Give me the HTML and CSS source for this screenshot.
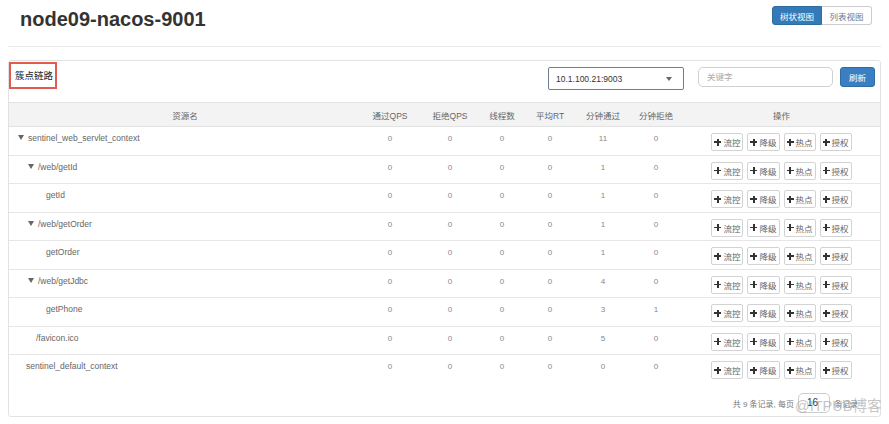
FILE: index.html
```html
<!DOCTYPE html>
<html lang="zh-CN">
<head>
    <meta charset="UTF-8">
    <title>簇点链路 - node09-nacos-9001</title>
    <link rel="stylesheet" href="styles.css">
</head>
<body>
    <div class="page-header">
        <h1>node09-nacos-9001</h1>
        <div class="view-toggle">
            <button class="toggle-btn active">树状视图</button>
            <button class="toggle-btn">列表视图</button>
        </div>
    </div>

    <div class="panel">
        <div class="panel-head">
            <div class="panel-title">簇点链路</div>
            <div class="controls">
                <div class="select-box">
                    <span>10.1.100.21:9003</span>
                    <span class="caret"></span>
                </div>
                <div class="search-box">关键字</div>
                <button class="refresh-btn">刷新</button>
            </div>
        </div>

        <table class="resource-table">
            <colgroup>
                <col style="width: 352px">
                <col style="width: 58px">
                <col style="width: 62px">
                <col style="width: 42px">
                <col style="width: 54px">
                <col style="width: 52px">
                <col style="width: 54px">
                <col style="width: 197px">
            </colgroup>
            <thead>
                <tr>
                    <th>资源名</th>
                    <th>通过QPS</th>
                    <th>拒绝QPS</th>
                    <th>线程数</th>
                    <th>平均RT</th>
                    <th>分钟通过</th>
                    <th>分钟拒绝</th>
                    <th>操作</th>
                </tr>
            </thead>
            <tbody>
                <tr>
                    <td class="name lvl-0"><span class="tri"></span>sentinel_web_servlet_context</td>
                    <td>0</td><td>0</td><td>0</td><td>0</td><td>11</td><td>0</td>
                    <td class="ops"><button><i class="plus"></i>流控</button><button><i class="plus"></i>降级</button><button><i class="plus"></i>热点</button><button><i class="plus"></i>授权</button></td>
                </tr>
                <tr>
                    <td class="name lvl-1"><span class="tri"></span>/web/getId</td>
                    <td>0</td><td>0</td><td>0</td><td>0</td><td>1</td><td>0</td>
                    <td class="ops"><button><i class="plus"></i>流控</button><button><i class="plus"></i>降级</button><button><i class="plus"></i>热点</button><button><i class="plus"></i>授权</button></td>
                </tr>
                <tr>
                    <td class="name lvl-2"><span class="leaf"></span>getId</td>
                    <td>0</td><td>0</td><td>0</td><td>0</td><td>1</td><td>0</td>
                    <td class="ops"><button><i class="plus"></i>流控</button><button><i class="plus"></i>降级</button><button><i class="plus"></i>热点</button><button><i class="plus"></i>授权</button></td>
                </tr>
                <tr>
                    <td class="name lvl-1"><span class="tri"></span>/web/getOrder</td>
                    <td>0</td><td>0</td><td>0</td><td>0</td><td>1</td><td>0</td>
                    <td class="ops"><button><i class="plus"></i>流控</button><button><i class="plus"></i>降级</button><button><i class="plus"></i>热点</button><button><i class="plus"></i>授权</button></td>
                </tr>
                <tr>
                    <td class="name lvl-2"><span class="leaf"></span>getOrder</td>
                    <td>0</td><td>0</td><td>0</td><td>0</td><td>1</td><td>0</td>
                    <td class="ops"><button><i class="plus"></i>流控</button><button><i class="plus"></i>降级</button><button><i class="plus"></i>热点</button><button><i class="plus"></i>授权</button></td>
                </tr>
                <tr>
                    <td class="name lvl-1"><span class="tri"></span>/web/getJdbc</td>
                    <td>0</td><td>0</td><td>0</td><td>0</td><td>4</td><td>0</td>
                    <td class="ops"><button><i class="plus"></i>流控</button><button><i class="plus"></i>降级</button><button><i class="plus"></i>热点</button><button><i class="plus"></i>授权</button></td>
                </tr>
                <tr>
                    <td class="name lvl-2"><span class="leaf"></span>getPhone</td>
                    <td>0</td><td>0</td><td>0</td><td>0</td><td>3</td><td>1</td>
                    <td class="ops"><button><i class="plus"></i>流控</button><button><i class="plus"></i>降级</button><button><i class="plus"></i>热点</button><button><i class="plus"></i>授权</button></td>
                </tr>
                <tr>
                    <td class="name lvl-1"><span class="leaf"></span>/favicon.ico</td>
                    <td>0</td><td>0</td><td>0</td><td>0</td><td>5</td><td>0</td>
                    <td class="ops"><button><i class="plus"></i>流控</button><button><i class="plus"></i>降级</button><button><i class="plus"></i>热点</button><button><i class="plus"></i>授权</button></td>
                </tr>
                <tr>
                    <td class="name lvl-0"><span class="leaf"></span>sentinel_default_context</td>
                    <td>0</td><td>0</td><td>0</td><td>0</td><td>0</td><td>0</td>
                    <td class="ops"><button><i class="plus"></i>流控</button><button><i class="plus"></i>降级</button><button><i class="plus"></i>热点</button><button><i class="plus"></i>授权</button></td>
                </tr>
            </tbody>
        </table>

        <div class="pager">
            <span>共 9 条记录, 每页</span>
            <span class="page-size">16</span>
            <span>条记录</span>
        </div>

        <div class="watermark">@ITPUB博客</div>
    </div>
</body>
</html>
```

FILE: styles.css
```css
* {
    margin: 0;
    padding: 0;
    box-sizing: border-box;
}

body {
    font-family: 'Liberation Sans', 'Noto Sans CJK SC', sans-serif;
    background-color: #fff;
    color: #333;
    width: 889px;
}

button {
    font-family: inherit;
    cursor: pointer;
}

/* Page header */
.page-header {
    display: flex;
    justify-content: space-between;
    align-items: flex-start;
    height: 47px;
    margin: 0 8px;
    border-bottom: 1px solid #eaeaea;
}

.page-header h1 {
    padding: 7px 0 0 12px;
    font-size: 20px;
    line-height: 24px;
    font-weight: bold;
    color: #333;
}

.view-toggle {
    display: flex;
    margin: 6px 9px 0 0;
}

.toggle-btn {
    width: 50px;
    height: 19px;
    font-size: 8.5px;
    border: 1px solid #ccc;
    background-color: #fff;
    color: #6a7a8c;
}

.toggle-btn.active {
    background-color: #337ab7;
    border-color: #2e6da4;
    color: #fff;
    border-radius: 3px 0 0 3px;
}

.toggle-btn + .toggle-btn {
    border-left: none;
    border-radius: 0 3px 3px 0;
}

/* Panel */
.panel {
    position: relative;
    margin: 13px 8px 0 8px;
    border: 1px solid #e2e2e2;
    border-radius: 3px;
    height: 357px;
}

.panel-head {
    display: flex;
    align-items: flex-start;
    height: 41px;
}

.panel-title {
    margin-top: 1px;
    width: 48px;
    height: 27px;
    border: 2px solid #e25b4f;
    padding-left: 4px;
    font-size: 9.5px;
    line-height: 23px;
    font-weight: normal;
    color: #222;
}

.controls {
    display: flex;
    align-items: flex-start;
    margin: 6px 5px 0 auto;
}

.select-box {
    display: flex;
    align-items: center;
    justify-content: space-between;
    width: 136px;
    height: 23px;
    padding: 0 11px 0 7px;
    border: 1px solid #6f7f90;
    border-radius: 2px;
    font-size: 8.5px;
    color: #333;
}

.caret {
    width: 0;
    height: 0;
    border-left: 3px solid transparent;
    border-right: 3px solid transparent;
    border-top: 4px solid #666;
}

.search-box {
    width: 135px;
    height: 20px;
    margin-left: 14px;
    padding-left: 8px;
    border: 1px solid #d0d0d0;
    border-radius: 5px;
    font-size: 8.5px;
    line-height: 18px;
    color: #aaa;
}

.refresh-btn {
    width: 35px;
    height: 20px;
    margin-left: 7px;
    border: 1px solid #2e6da4;
    border-radius: 3px;
    background-color: #3a7fc1;
    color: #fff;
    font-size: 8.5px;
}

/* Table */
.resource-table {
    width: 100%;
    table-layout: fixed;
    border-collapse: collapse;
}

.resource-table th {
    height: 24px;
    background-color: #f3f3f3;
    border-top: 1px solid #e2e2e2;
    border-bottom: 1px solid #e2e2e2;
    font-size: 8.5px;
    font-weight: normal;
    color: #666;
    text-align: center;
}

.resource-table td {
    height: 28.5px;
    padding-top: 5px;
    vertical-align: top;
    text-align: center;
    font-size: 8px;
    line-height: 13px;
    color: #888;
    border-bottom: 1px solid #e6e6e6;
}

.resource-table tbody tr:last-child td {
    border-bottom: none;
}

.resource-table td.name {
    text-align: left;
    color: #666;
    font-size: 8.5px;
}

.lvl-0 { padding-left: 8px; }
.lvl-1 { padding-left: 18px; }
.lvl-2 { padding-left: 28px; }

.tri {
    display: inline-block;
    width: 0;
    height: 0;
    margin: 0 4px 1px 1px;
    border-left: 3px solid transparent;
    border-right: 3px solid transparent;
    border-top: 5px solid #666;
}

.leaf {
    display: inline-block;
    width: 9px;
}

.ops {
    white-space: nowrap;
}

.ops button {
    display: inline-flex;
    align-items: center;
    height: 18px;
    margin: 1px 2px 0;
    padding: 0 2px;
    border: 1px solid #d3d3d3;
    border-radius: 2px;
    background-color: #fff;
    font-size: 8.5px;
    color: #666;
}

.plus {
    position: relative;
    display: inline-block;
    width: 7px;
    height: 7px;
    margin-right: 2px;
}

.plus:before,
.plus:after {
    content: "";
    position: absolute;
    background-color: #333;
}

.plus:before {
    left: 2.7px;
    top: 0;
    width: 1.7px;
    height: 7px;
}

.plus:after {
    left: 0;
    top: 2.7px;
    width: 7px;
    height: 1.7px;
}

/* Pager */
.pager {
    display: flex;
    justify-content: flex-end;
    align-items: center;
    gap: 4px;
    margin-top: 10px;
    padding-right: 22px;
    font-size: 8px;
    color: #777;
}

.page-size {
    width: 32px;
    height: 20px;
    padding-left: 8px;
    border: 1px solid #ccc;
    border-radius: 5px;
    font-size: 10px;
    line-height: 18px;
    color: #333;
}

.watermark {
    position: absolute;
    left: 786px;
    bottom: 1px;
    white-space: nowrap;
    font-size: 14.5px;
    color: rgba(140, 140, 140, 0.5);
    pointer-events: none;
}
```
